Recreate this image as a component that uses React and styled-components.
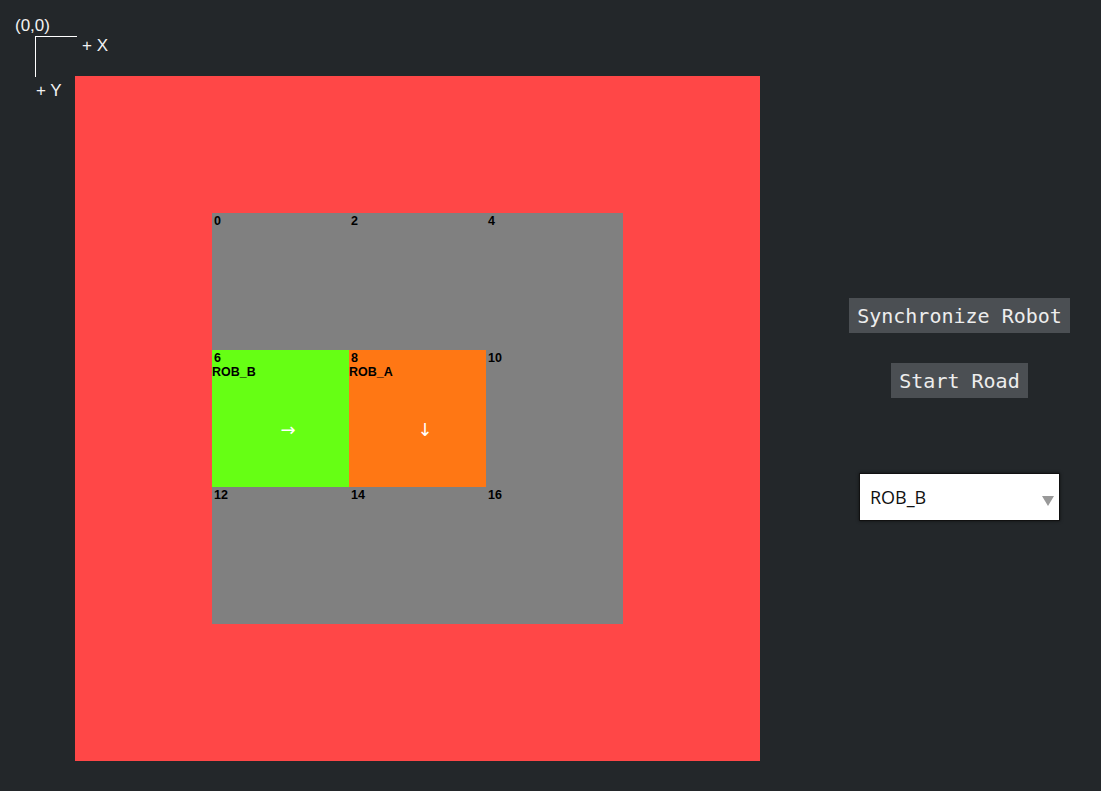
import React, { useState } from 'react';
import styled, { createGlobalStyle } from 'styled-components';

const CELL = 137;

const GlobalStyle = createGlobalStyle`
    html, body {
        margin: 0;
        padding: 0;
        background-color: #23272a;
        font-family: "Liberation Sans", Arial, sans-serif;
    }
`;

const cells = [
    { id: 0 }, { id: 2 }, { id: 4 },
    { id: 6, robot: 'ROB_B', color: '#66ff14', arrow: '→' },
    { id: 8, robot: 'ROB_A', color: '#ff7714', arrow: '↓' },
    { id: 10 },
    { id: 12 }, { id: 14 }, { id: 16 },
];

const App = () => {
    const [robot, setRobot] = useState('ROB_B');

    return (
        <Page>
            <GlobalStyle />
            <Stage>
                <Axis>
                    <Origin>(0,0)</Origin>
                    <Corner />
                    <AxisX>+ X</AxisX>
                    <AxisY>+ Y</AxisY>
                </Axis>
                <Board>
                    <Grid>
                        {cells.map((c) => (
                            <Cell key={c.id} $color={c.color}>
                                <CellLabel>{c.id}</CellLabel>
                                {c.robot && <RobotName>{c.robot}</RobotName>}
                                {c.arrow && <Arrow>{c.arrow}</Arrow>}
                            </Cell>
                        ))}
                    </Grid>
                </Board>
            </Stage>
            <Controls>
                <Button>Synchronize Robot</Button>
                <Button>Start Road</Button>
                <SelectWrap>
                    <Select value={robot} onChange={(e) => setRobot(e.target.value)}>
                        <option value="ROB_B">ROB_B</option>
                        <option value="ROB_A">ROB_A</option>
                    </Select>
                    <Caret />
                </SelectWrap>
            </Controls>
        </Page>
    );
};

export default App;

const Page = styled.div`
    display: flex;
    width: 1101px;
    height: 791px;
    overflow: hidden;
`;

const Stage = styled.div`
    position: relative;
    width: 818px;
    padding: 76px 0 0 75px;
    box-sizing: border-box;
`;

const Axis = styled.div`
    position: absolute;
    left: 0;
    top: 0;
    width: 120px;
    height: 100px;
    color: #f2f2f2;
    font-size: 17px;
`;

const Origin = styled.span`
    position: absolute;
    left: 15px;
    top: 16px;
`;

const Corner = styled.div`
    position: absolute;
    left: 35px;
    top: 36px;
    width: 41px;
    height: 40px;
    border-left: 1px solid #fff;
    border-top: 1px solid #fff;
`;

const AxisX = styled.span`
    position: absolute;
    left: 82px;
    top: 36px;
`;

const AxisY = styled.span`
    position: absolute;
    left: 36px;
    top: 81px;
`;

const Board = styled.div`
    width: ${CELL * 5}px;
    height: ${CELL * 5}px;
    padding: ${CELL}px;
    box-sizing: border-box;
    background-color: #ff4747;
`;

const Grid = styled.div`
    display: grid;
    grid-template-columns: repeat(3, ${CELL}px);
    grid-template-rows: repeat(3, ${CELL}px);
    background-color: #808080;
`;

const Cell = styled.div`
    position: relative;
    display: flex;
    flex-direction: column;
    background-color: ${(p) => p.$color || 'transparent'};
    color: #000;
    font-weight: bold;
    font-size: 12.5px;
    line-height: 13px;
`;

const CellLabel = styled.span`
    padding: 2px 0 0 2px;
`;

const RobotName = styled.span`
    padding-top: 1px;
`;

const Arrow = styled.span`
    position: absolute;
    left: 50%;
    top: 50%;
    font-family: "DejaVu Sans", sans-serif;
    font-weight: normal;
    font-size: 18px;
    line-height: 21px;
    color: #fff;
`;

const Controls = styled.div`
    flex: 1;
    display: flex;
    flex-direction: column;
    align-items: center;
    padding-top: 298px;
`;

const Button = styled.button`
    height: 35px;
    margin: 0 0 30px;
    padding: 0 8px;
    border: none;
    border-radius: 0;
    background-color: #4b4f53;
    color: #ededed;
    font-family: "DejaVu Sans Mono", monospace;
    font-size: 20px;
    cursor: pointer;
`;

const SelectWrap = styled.div`
    position: relative;
    margin-top: 45px;
    box-shadow: 0 0 3px rgba(0, 0, 0, 0.6);
`;

const Select = styled.select`
    appearance: none;
    width: 201px;
    height: 48px;
    padding: 0 0 0 10px;
    border: 1px solid #111;
    border-radius: 0;
    background-color: #fff;
    color: #111;
    font-family: "Open Sans", sans-serif;
    font-size: 18px;
    outline: none;
`;

const Caret = styled.div`
    position: absolute;
    right: 6px;
    top: 23px;
    width: 0;
    height: 0;
    border-left: 6px solid transparent;
    border-right: 6px solid transparent;
    border-top: 10px solid #999;
    pointer-events: none;
`;
